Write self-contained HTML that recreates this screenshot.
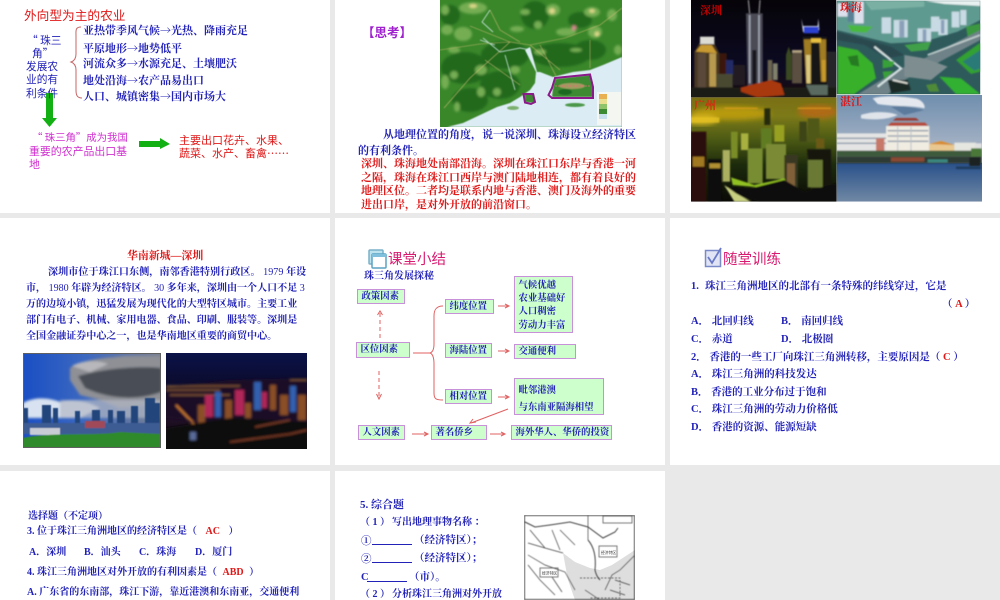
<!DOCTYPE html>
<html lang="zh"><head><meta charset="utf-8"><title>珠三角</title>
<style>
html,body{margin:0;padding:0;width:1000px;height:600px;overflow:hidden;background:#e9e9e9}
#wrap{position:relative;width:1000px;height:600px;overflow:hidden;filter:blur(.35px)}
.s{position:absolute;background:#fff}
svg{position:absolute;left:0;top:0}
.t{position:absolute;white-space:nowrap;line-height:14px;margin-top:1px;font-family:"Liberation Serif","Noto Serif CJK SC",serif;font-weight:700;font-size:10.5px;color:#2222b8}
.c{font-family:"Noto Serif CJK SC",serif}
.h{font-family:"Noto Sans CJK SC","Liberation Sans",sans-serif;font-weight:400}
.r{color:#e01818}.m{color:#d030d0}
.u{display:inline-block;border-bottom:1px solid #2222b8;height:10px;vertical-align:baseline}
.b{position:absolute;box-sizing:border-box;background:#ccffcc;border:1.5px dotted #b040c0;outline:1px solid #c890d8;outline-offset:-1px;color:#2222b8;font:700 9.4px/13px "Liberation Serif","Noto Serif CJK SC",serif;padding:.5px 0 0 3.5px;white-space:nowrap}
</style></head><body><div id="wrap">
<div class="s" style="left:0;top:0;width:330px;height:213px"></div>
<div class="s" style="left:335px;top:0;width:330px;height:213px"></div>
<div class="s" style="left:670px;top:0;width:330px;height:213px"></div>
<div class="s" style="left:0;top:218px;width:330px;height:247px"></div>
<div class="s" style="left:335px;top:218px;width:330px;height:247px"></div>
<div class="s" style="left:670px;top:218px;width:330px;height:247px"></div>
<div class="s" style="left:0;top:471px;width:330px;height:129px"></div>
<div class="s" style="left:335px;top:471px;width:330px;height:129px"></div>

<svg width="1000" height="600" viewBox="0 0 1000 600">
<defs>
<clipPath id="c1"><rect x="440" y="0" width="182" height="127"/></clipPath>
<clipPath id="a2"><rect x="0" y="0" width="436" height="292"/></clipPath>
<clipPath id="a3"><rect x="437" y="2" width="431" height="281"/></clipPath>
<clipPath id="a4"><rect x="0" y="292" width="437" height="313"/></clipPath>
<clipPath id="a5"><rect x="437" y="285" width="436" height="320"/></clipPath>
<clipPath id="c6"><rect x="23" y="353" width="138" height="95"/></clipPath>
<clipPath id="c7"><rect x="166" y="353" width="141" height="96"/></clipPath>
<clipPath id="c8"><rect x="524" y="515" width="111" height="85"/></clipPath>
<linearGradient id="g1" x1="0" y1="0" x2="0" y2="1"><stop offset="0" stop-color="#060408"/><stop offset=".7" stop-color="#0c0a22"/><stop offset="1" stop-color="#1a0c10"/></linearGradient>
<linearGradient id="g2" x1="0" y1="0" x2="0" y2="1"><stop offset="0" stop-color="#7a6e14"/><stop offset=".18" stop-color="#7c7a18"/><stop offset=".4" stop-color="#4c5a14"/><stop offset=".65" stop-color="#1c2a0c"/><stop offset="1" stop-color="#0a0a06"/></linearGradient>
<linearGradient id="g3" x1="0" y1="0" x2="0" y2="1"><stop offset="0" stop-color="#6f8eae"/><stop offset=".8" stop-color="#a8b4c6"/></linearGradient>
<linearGradient id="g4" x1="0" y1="0" x2="0" y2="1"><stop offset="0" stop-color="#28508a"/><stop offset="1" stop-color="#7088a4"/></linearGradient>
<linearGradient id="g5" x1="0" y1="0" x2="1" y2="0"><stop offset="0" stop-color="#1a4fc4"/><stop offset=".45" stop-color="#3c68c0"/><stop offset="1" stop-color="#7a8090"/></linearGradient>
<linearGradient id="g6" x1="0" y1="0" x2="0" y2="1"><stop offset="0" stop-color="#0a1248"/><stop offset=".3" stop-color="#0c0c30"/><stop offset=".7" stop-color="#201026"/><stop offset="1" stop-color="#050508"/></linearGradient>
<filter id="bl"><feGaussianBlur stdDeviation="1.3"/></filter>
<filter id="bl2"><feGaussianBlur stdDeviation=".5"/></filter>
<filter id="bl3"><feGaussianBlur stdDeviation="2"/></filter>
<filter id="bl4"><feGaussianBlur stdDeviation="8"/></filter>
</defs>

<!-- slide 1 -->
<path d="M81 27C75 27 76 31 76 36V54C76 59 74 61 71 62C74 63 76 65 76 70V90C76 95 77 98 82 98" fill="none" stroke="#c86464" stroke-width="1"/>
<path d="M46 93H53V118H57L49.500 127L42 118H46Z" fill="#12b012"/>
<path d="M139 141H160V138L170 144L160 149V147H139Z" fill="#12b012"/>

<!-- slide 2 map -->
<g clip-path="url(#c1)">
<rect x="440" y="0" width="182" height="127" fill="#3a872a"/>
<g filter="url(#bl)">
<g fill="#20691c">
<ellipse cx="465" cy="68" rx="24" ry="16"/><ellipse cx="505" cy="55" rx="24" ry="14"/><ellipse cx="500" cy="85" rx="20" ry="14"/><ellipse cx="470" cy="100" rx="18" ry="12"/><ellipse cx="560" cy="55" rx="30" ry="12"/><ellipse cx="590" cy="50" rx="16" ry="10"/><ellipse cx="535" cy="15" rx="14" ry="14"/><ellipse cx="450" cy="15" rx="10" ry="10"/><ellipse cx="580" cy="20" rx="12" ry="8"/>
</g>
<g fill="#74ad52">
<ellipse cx="473" cy="8" rx="14" ry="6"/><ellipse cx="445" cy="10" rx="4" ry="5"/><ellipse cx="447" cy="30" rx="6" ry="5"/><ellipse cx="463" cy="34" rx="9" ry="7"/><ellipse cx="454" cy="50" rx="6" ry="3"/><ellipse cx="454" cy="75" rx="4" ry="4"/>
<ellipse cx="481" cy="70" rx="6" ry="5"/><ellipse cx="445" cy="82" rx="4" ry="7"/><ellipse cx="481" cy="92" rx="4" ry="5"/><ellipse cx="497" cy="92" rx="4" ry="4"/><ellipse cx="457" cy="107" rx="3" ry="5"/>
<ellipse cx="517" cy="29" rx="7" ry="3"/><ellipse cx="538" cy="25" rx="4" ry="4"/><ellipse cx="553" cy="10" rx="7" ry="6"/><ellipse cx="566" cy="32" rx="10" ry="4"/><ellipse cx="595" cy="32" rx="7" ry="6"/><ellipse cx="612" cy="15" rx="5" ry="6"/>
<ellipse cx="592" cy="12" rx="8" ry="5"/><ellipse cx="540" cy="52" rx="6" ry="3"/><ellipse cx="576" cy="50" rx="6" ry="2"/><ellipse cx="618" cy="50" rx="4" ry="5"/><ellipse cx="515" cy="70" rx="5" ry="4"/><ellipse cx="525" cy="12" rx="5" ry="3"/>
</g>
<g fill="#dcd788"><ellipse cx="552" cy="11" rx="3" ry="3"/><ellipse cx="473" cy="6" rx="4" ry="2"/><ellipse cx="597" cy="34" rx="2.500" ry="2.500"/><ellipse cx="592" cy="11" rx="3" ry="2"/></g>
<ellipse cx="574" cy="28" rx="2.500" ry="2.500" fill="#d88890"/>
</g>
<path d="M525 50L530 47L537 72L540 72L553 77L573 72L590 70L603 65L622 57V127H447L463 123L480 115L497 107L510 103L520 97L530 90L535 83L536 72Z" fill="#dcecf4" filter="url(#bl2)"/>
<g filter="url(#bl2)">
<path d="M555 79L590 75L593 87L593 97L552 97L553 88Z" fill="#3c8a32"/>
<ellipse cx="572" cy="86" rx="13" ry="3" fill="#a09a60"/><ellipse cx="565" cy="92" rx="7" ry="3" fill="#1f6a20"/>
<path d="M524 94H534L535 103L525 102Z" fill="#3c8a32"/>
<ellipse cx="575" cy="105" rx="10" ry="2" fill="#4c9848"/><ellipse cx="513" cy="108" rx="6" ry="2" fill="#7cb070"/>
</g>
<g fill="none" stroke-width=".6" opacity=".8" filter="url(#bl2)">
<path d="M444 108L470 78L510 42L530 45L565 38L600 25L622 8M470 26L510 42L530 45M490 10L500 30L520 42M530 45L560 70M540 45L556 76M590 40L590 68M440 50L480 44L510 42M485 60L520 85" stroke="#d8c078"/>
<path d="M490 10L482 22L493 32M483 38L500 52L520 48L530 50M505 55L515 90M495 45L480 40" stroke="#d8eef0" stroke-width=".9"/>
</g>
<path d="M523.500 94H533L535 102L531 104L525 102.500Z" fill="none" stroke="#8a1a8a" stroke-width="2"/>
<path d="M555 78L590 74.500L593 87L593 98L552 98L548.500 95L552 88Z" fill="none" stroke="#8a1a8a" stroke-width="2"/>
<path d="M555 86H590" stroke="#e07070" stroke-width=".8" stroke-dasharray="2 1"/>
<rect x="597" y="92" width="24" height="33" fill="#f4f6f2"/>
<rect x="599" y="94" width="8" height="5" fill="#e8b050"/><rect x="599" y="99" width="8" height="5" fill="#e8e090"/><rect x="599" y="104" width="8" height="5" fill="#8fc46a"/><rect x="599" y="109" width="8" height="5" fill="#3c8a32"/><rect x="599" y="114" width="8" height="5" fill="#c8e0ec"/>
</g>

<!-- slide 3 photos (zoom coordinates) -->
<g transform="translate(691 0) scale(.33333)">
<g clip-path="url(#a2)">
<rect width="436" height="292" fill="url(#g1)"/>
<g filter="url(#bl3)">
<path d="M172 0L176 40M207 0L204 40" stroke="#b0b0b0" stroke-width="3"/>
<path d="M165 40H215V260H170Z" fill="#4c4c56"/><path d="M176 45V250M204 45V250" stroke="#aeb2c0" stroke-width="4"/><path d="M190 150V260" stroke="#14141c" stroke-width="12"/>
<path d="M10 155L25 130H70L85 160V290H10Z" fill="#4a3820"/><rect x="27" y="110" width="43" height="22" fill="#dcdcd4"/><path d="M14 155L30 135H62L78 160Z" fill="#c89a30"/><path d="M55 160H75V260H55Z" fill="#b89a50"/><path d="M20 160H45V290H20Z" fill="#5a4a3a"/>
<rect x="85" y="160" width="22" height="115" fill="#3a1810"/><rect x="105" y="180" width="22" height="45" fill="#202a68"/><rect x="127" y="195" width="35" height="60" fill="#201a22"/><rect x="75" y="222" width="50" height="50" fill="#4a4830"/>
<rect x="230" y="180" width="14" height="70" fill="#6a6450"/><rect x="246" y="190" width="14" height="50" fill="#80806c"/><path d="M285 165L293 140L302 165V240H285Z" fill="#3a4a20"/><rect x="303" y="150" width="30" height="100" fill="#5a5040"/><rect x="303" y="150" width="30" height="8" fill="#b0a080"/>
<rect x="408" y="155" width="28" height="120" fill="#26262c"/>
<path d="M335 110H408L408 270H345Z" fill="#141418"/><path d="M338 118H360V250H345ZM385 118H405V245H390Z" fill="#a07c22"/><path d="M345 165H358V250H347Z" fill="#d8c880"/><path d="M392 180H404V245H394Z" fill="#c89a2c"/><path d="M360 115H390V128H360Z" fill="#e8c040"/>
<path d="M331 55L336 96L385 90L382 55L380 78L336 78Z" fill="#e0e8ff"/><rect x="338" y="80" width="45" height="20" fill="#2a40d0"/>
<path d="M0 262H436V292H0Z" fill="#1c1a14"/><path d="M150 262L240 240L270 250L280 285L200 292L150 275Z" fill="#a83810"/><path d="M345 255H410V285H360Z" fill="#5a6a60"/>
</g>
</g>
<g clip-path="url(#a3)">
<rect x="437" y="2" width="431" height="281" fill="#2e5a5c"/>
<g filter="url(#bl3)">
<path d="M437 2H868V60L800 95L700 125L600 130L437 90Z" fill="#5f9a90"/><path d="M700 2H868V18L760 12Z" fill="#e8f0f0"/>
<path d="M520 2H700V20L540 30Z" fill="#7ab0a4"/>
<path d="M440 10H470V50H440ZM490 5H518V70H490Z" fill="#dce0ec"/><path d="M470 12H488V65H470Z" fill="#5a8098"/>
<path d="M572 52H600V100H572ZM608 60H650V112H608ZM680 85H720V125H680ZM720 50H745V95H720ZM742 58H770V105H742ZM782 35H805V82H782ZM808 30H826V75H808Z" fill="#c8dae4"/><path d="M625 62H640V112H625ZM695 88H706V125H695ZM750 60H760V100H750Z" fill="#8aa0b8"/>
<path d="M470 75L545 80L525 98L480 95Z" fill="#48b840"/><path d="M640 135L720 125L710 150L660 155Z" fill="#40a048"/><path d="M825 80L868 70V95L830 110Z" fill="#3a9840"/>
<path d="M437 95L600 140L640 165L590 175L520 135L437 120Z" fill="#2a4850"/>
<path d="M440 138L500 150L545 190L555 235L490 282H440Z" fill="#38b02c"/><path d="M470 170L500 165L505 200L480 195Z" fill="#287a20"/>
<path d="M868 90L700 175L620 210L500 283H590L640 240L700 210L868 120Z" fill="#6e8288"/><path d="M550 140L630 205L560 260" stroke="#d8e4e4" stroke-width="6" fill="none"/><path d="M868 105L710 165" stroke="#c4d0d0" stroke-width="5"/>
<path d="M575 178L610 185L605 200L575 205ZM575 215L608 213L580 238Z" fill="#38a038"/>
<path d="M868 128L795 180L840 222L868 215Z" fill="#30a030"/><path d="M868 150L815 185L850 212L868 205Z" fill="#2a7a78"/>
<path d="M745 230L810 235L868 282H795Z" fill="#30b030"/><path d="M705 255L735 250L745 275H715Z" fill="#508a38"/>
<path d="M590 240H650L660 270L600 280Z" fill="#1c2a28"/><path d="M605 240L650 250" stroke="#e0e0d8" stroke-width="5"/><path d="M640 165L700 175L770 200L720 240L640 230Z" fill="#7e8e90"/>
</g>
</g>
<g clip-path="url(#a4)">
<rect y="292" width="437" height="313" fill="url(#g2)"/>
<g filter="url(#bl4)"><ellipse cx="120" cy="340" rx="120" ry="20" fill="#b89a10"/><ellipse cx="380" cy="335" rx="60" ry="20" fill="#b06a14"/><ellipse cx="30" cy="360" rx="50" ry="14" fill="#d8b820"/></g>
<g filter="url(#bl3)">
<path d="M0 352H85V368H0Z" fill="#e4c020" opacity=".8"/><path d="M320 325H420M100 325H200" stroke="#e8a020" stroke-width="4" opacity=".7"/>
<rect x="220" y="325" width="18" height="50" fill="#262c10"/>
<rect x="325" y="365" width="22" height="60" fill="#3c4414"/><rect x="350" y="355" width="35" height="70" fill="#505818"/>
<rect x="150" y="400" width="22" height="50" fill="#a8b040"/><rect x="120" y="395" width="20" height="80" fill="#7a8c28"/><rect x="210" y="385" width="32" height="60" fill="#607c20"/><rect x="250" y="375" width="30" height="50" fill="#98a020"/>
<rect x="170" y="445" width="45" height="105" fill="#788c30"/><rect x="225" y="432" width="60" height="105" fill="#7a8a34"/><rect x="95" y="450" width="22" height="95" fill="#aab060"/><rect x="280" y="465" width="40" height="105" fill="#383820"/><path d="M288 490H312V560H288Z" fill="#806038"/>
<path d="M120 532L190 555L280 535L300 570L180 560L125 555Z" fill="#90c020"/>
<path d="M0 395H46V605H0Z" fill="#2c1008"/><path d="M5 470H40V500H5Z" fill="#a07820"/>
<path d="M50 478H92V605H50Z" fill="#0e0e08"/><path d="M55 490H88V505H55Z" fill="#b09030"/>
<path d="M348 448H420V570L360 575Z" fill="#141408"/><path d="M375 415H400V445H375Z" fill="#6a5a18"/><path d="M350 480H395V562H350Z" fill="#6a7a34"/>
<path d="M100 560L180 565L280 540L340 575L437 550V605H210L120 585Z" fill="#0a0e08"/><path d="M100 555L135 580L180 605H130Z" fill="#c8d080"/>
</g>
</g>
<g clip-path="url(#a5)">
<rect x="437" y="285" width="436" height="205" fill="url(#g3)"/>
<rect x="437" y="488" width="436" height="117" fill="url(#g4)"/>
<g filter="url(#bl3)">
<path d="M545 295C580 285 640 290 670 295C690 296 705 315 700 325C660 315 600 320 560 312Z" fill="#e4e8ee"/><path d="M510 345C545 332 600 335 620 345C590 360 540 360 510 355Z" fill="#dfe4ea"/><path d="M600 320C640 315 680 325 700 330L640 345Z" fill="#5c7a9c"/>
<path d="M437 400H585V460H437Z" fill="#e4e4e4"/><path d="M437 415H585M437 430H585" stroke="#8a98a8" stroke-width="4"/><rect x="555" y="415" width="25" height="45" fill="#c87868"/>
<path d="M585 378H715V460H585Z" fill="#f0ece2"/><path d="M590 378H712L702 368H600Z" fill="#b84a3a"/><path d="M605 362H685L675 354H615Z" fill="#9a3a30"/>
<path d="M590 392H712M590 408H712M590 424H712" stroke="#8a98a8" stroke-width="4"/><path d="M620 380V458M660 380V458" stroke="#b8c0c8" stroke-width="3"/>
<path d="M715 432L750 423L790 435V460H715Z" fill="#e8c890"/><path d="M715 432L750 423L790 435Z" fill="#d88a30"/>
<path d="M790 428H855V458H790Z" fill="#e6e6e0"/><rect x="852" y="430" width="20" height="18" fill="#e0e0e0"/>
<path d="M437 452H872V470H437Z" fill="#3e5a3c"/><path d="M840 445H872V470H840Z" fill="#4a7838"/>
<path d="M437 470H872V490H437Z" fill="#2e3a34"/><path d="M600 472H700V485H600Z" fill="#8a4a30"/><path d="M710 478H770V487H710Z" fill="#3a8a80"/><path d="M795 500H870V507H795Z" fill="#1e3a5c"/><path d="M835 472H868V498H835Z" fill="#1e2420"/>
</g>
</g>
</g>

<!-- slide 4 photos -->
<g clip-path="url(#c6)">
<rect x="23" y="353" width="138" height="95" fill="url(#g5)"/>
<g filter="url(#bl)">
<path d="M70 368C85 358 110 358 125 356L161 356V405L120 408L100 400L80 395L70 380Z" fill="#8e9096"/>
<path d="M78 376C105 368 140 366 161 368V392C140 400 110 400 85 388Z" fill="#4a4d54"/>
<path d="M72 366C82 360 98 360 108 364L90 372Z" fill="#b8b8bc"/>
<path d="M23 403C35 396 50 398 60 402C72 398 90 402 100 408L80 418H23Z" fill="#d8e2f0"/>
<rect x="60" y="400" width="101" height="18" fill="#b4b8c4" opacity=".7"/>
</g>
<g filter="url(#bl2)">
<path d="M23 408L28 408V430H23ZM42 405H51V430H42ZM53 408H58V430H53ZM75 411H80V428H75ZM92 410H100V428H92ZM108 410H113V428H108ZM117 411H125V428H117ZM131 406H138V428H131ZM145 398H155V432H145ZM155 403H160V432H155Z" fill="#24447c"/>
<rect x="23" y="423" width="138" height="11" fill="#3e5c94"/>
<path d="M30 428H60V435H30Z" fill="#c8ccd4"/><path d="M85 421H105V428H85Z" fill="#a04a58"/>
<path d="M23 438C50 432 100 436 120 432L161 434V448H23Z" fill="#2e8a2a"/>
</g>
<rect x="23.500" y="353.500" width="137" height="94" fill="none" stroke="#606060"/>
</g>
<g clip-path="url(#c7)">
<rect x="166" y="353" width="141" height="96" fill="url(#g6)"/>
<g filter="url(#bl)">
<path d="M166 387L230 380L307 378V430L166 418Z" fill="#1a0c28"/>
<path d="M166 386H240M166 390H220M170 395H230M290 380H307" stroke="#e8a040" stroke-width="1" opacity=".6"/>
<path d="M176 405L195 425" stroke="#f09030" stroke-width="1.500"/>
<g fill="#b02858"><rect x="205" y="395" width="8" height="22"/><rect x="235" y="390" width="9" height="25"/><rect x="262" y="392" width="5" height="16"/></g>
<g fill="#3060b0"><rect x="215" y="392" width="6" height="25"/><rect x="254" y="382" width="7" height="28"/><rect x="290" y="386" width="6" height="26"/></g>
<g fill="#8a5028"><rect x="198" y="405" width="7" height="18"/><rect x="225" y="400" width="7" height="22"/><rect x="245" y="403" width="6" height="15"/><rect x="270" y="385" width="6" height="25"/><rect x="280" y="395" width="8" height="20"/><rect x="298" y="395" width="8" height="25"/></g>
<path d="M166 428L230 418L307 422V449H166Z" fill="#08080c"/>
<path d="M230 442L290 434L307 430M255 427L290 420" stroke="#a05030" stroke-width="1"/>
<rect x="190" y="432" width="6" height="8" fill="#5a6a9a"/>
</g>
</g>

<!-- slide 5 icon + arrows -->
<g fill="none">
<rect x="369" y="250" width="14" height="14" rx="1" fill="#bde3ef" stroke="#7ab0c8" stroke-width="1.500"/>
<rect x="372" y="254" width="14" height="14" rx="1" fill="#fff" stroke="#5aa4c4" stroke-width="1.500"/>
<rect x="372" y="254" width="14" height="3" fill="#80c0dc"/>
</g>
<g stroke="#e06060" stroke-width="1" fill="none">
<path d="M380 338V311" stroke-dasharray="4 3"/><path d="M377.500 315L380 311L382.500 315"/>
<path d="M379 371V398" stroke-dasharray="4 3"/><path d="M376.500 394L379 399L381.500 394"/>
<path d="M413 353H430"/>
<path d="M443 306C436 306 434 310 434 316V344C434 349 433 352 430 353C433 354 434 358 434 364V393C434 399 436 400 443 400"/>
<path d="M498 306H509M505 304L509 306L505 308M498 351H509M505 349L509 351L505 353M498 397H509M505 395L509 397L505 399"/>
<path d="M508 409L471 423M476 422L470 423L473 419"/>
<path d="M412 434H428M424 432L428 434L424 436M490 434H505M501 432L505 434L501 436"/>
</g>

<!-- slide 6 icon -->
<rect x="705.500" y="250.500" width="15" height="16" fill="#e0e4f4" stroke="#7a8ac8" stroke-width="1.500"/>
<path d="M708 257L712 263L721 248" fill="none" stroke="#6a7ac8" stroke-width="1.800"/>

<!-- slide 8 map -->
<g clip-path="url(#c8)">
<rect x="524" y="515" width="111" height="85" fill="#fff"/>
<path d="M563 553L575 562L590 568L600 570L612 565L635 550V600H575L568 580Z" fill="#dedede"/>
<g fill="none" stroke="#444" stroke-width=".7" filter="url(#bl2)">
<rect x="524.500" y="515.500" width="110" height="84" stroke-width="1"/>
<path d="M525 522L535 527L550 525L570 522L588 527L603 538L615 532L618 528" stroke-width="1"/>
<path d="M588 540C595 548 596 560 595 570C596 575 598 578 600 580" stroke-width="1"/>
<path d="M528 543L545 548L563 553M528 555L545 565L565 572L575 590M528 565L540 580L555 595M530 530L545 548M552 530L560 550M560 530L575 545"/>
<path d="M605 590L612 575L620 570L635 555M585 590L600 600M610 590L625 595M615 580L630 585"/>
<rect x="599" y="546" width="18" height="11"/><rect x="540" y="568" width="18" height="9"/><rect x="603" y="516" width="29" height="7"/>
<path d="M580 578H620V598H590" stroke-dasharray="2 1.500"/><path d="M588 515V540"/>
<path d="M552 577L562 592"/>
</g>
<g font-family="Liberation Sans,Noto Sans CJK SC,sans-serif" font-size="3.800" fill="#333"><text x="601" y="554">经济特区</text><text x="542" y="574.500">经济特区</text></g>
</g>
</svg>

<!-- slide 1 text -->
<div class="t h r" style="left:24px;top:7px;font-size:12.7px">外向型为主的农业</div>
<div class="t h" style="left:27px;top:33px;font-size:10.700px">“ 珠三</div>
<div class="t h" style="left:32px;top:46px;font-size:10.700px">角”</div>
<div class="t h" style="left:26px;top:59px;font-size:10.700px">发展农</div>
<div class="t h" style="left:26px;top:72px;font-size:10.700px">业的有</div>
<div class="t h" style="left:26px;top:86px;font-size:10.700px">利条件</div>
<div class="t c" style="left:83px;top:22px;font-size:11px">亚热带季风气候→光热、降雨充足</div>
<div class="t c" style="left:83px;top:40px;font-size:11px">平原地形→地势低平</div>
<div class="t c" style="left:83px;top:55px;font-size:11px">河流众多→水源充足、土壤肥沃</div>
<div class="t c" style="left:83px;top:72px;font-size:11px">地处沿海→农产品易出口</div>
<div class="t c" style="left:83px;top:88px;font-size:11px">人口、城镇密集→国内市场大</div>
<div class="t h m" style="left:32px;top:129px;font-size:10.400px">“ 珠三角”成为我国</div>
<div class="t h m" style="left:29px;top:143px;font-size:10.900px">重要的农产品出口基</div>
<div class="t h m" style="left:29px;top:156px;font-size:10.900px">地</div>
<div class="t h r" style="left:179px;top:132px;font-size:11px">主要出口花卉、水果、</div>
<div class="t h r" style="left:179px;top:145px;font-size:11px">蔬菜、水产、畜禽……</div>

<!-- slide 2 text -->
<div class="t h" style="left:362px;top:24px;font-size:12.500px;font-weight:700;color:#a020d0">【思考】</div>
<div class="t" style="left:383px;top:127px;font-size:11px">从地理位置的角度，说一说深圳、珠海设立经济特区</div>
<div class="t" style="left:358px;top:143px;font-size:11px">的有利条件。</div>
<div class="t r" style="left:361px;top:156px;font-size:11px">深圳、珠海地处南部沿海。深圳在珠江口东岸与香港一河</div>
<div class="t r" style="left:361px;top:170px;font-size:11px">之隔，珠海在珠江口西岸与澳门陆地相连，都有着良好的</div>
<div class="t r" style="left:361px;top:183px;font-size:11px">地理区位。二者均是联系内地与香港、澳门及海外的重要</div>
<div class="t r" style="left:361px;top:197px;font-size:11px">进出口岸，是对外开放的前沿窗口。</div>

<!-- slide 3 labels -->
<div class="t" style="left:700px;top:3px;font-size:11px;color:#c00000">深圳</div>
<div class="t" style="left:840px;top:0;font-size:11px;color:#d81010">珠海</div>
<div class="t" style="left:694px;top:98px;font-size:11px;color:#d03010">广州</div>
<div class="t" style="left:840px;top:94px;font-size:11px;color:#e01010">湛江</div>

<!-- slide 4 text -->
<div class="t r" style="left:127px;top:248px;font-size:10.900px">华南新城—深圳</div>
<div class="t" style="left:48px;top:265px;font-size:10.150px">深圳市位于珠江口东侧，南邻香港特别行政区。 <span style="font-weight:400">1979</span> 年设</div>
<div class="t" style="left:26px;top:281px;font-size:10.050px">市， <span style="font-weight:400">1980</span> 年辟为经济特区。 <span style="font-weight:400">30</span> 多年来，深圳由一个人口不足 <span style="font-weight:400">3</span></div>
<div class="t" style="left:26px;top:297px;font-size:10.050px">万的边境小镇，迅猛发展为现代化的大型特区城市。主要工业</div>
<div class="t" style="left:26px;top:313px;font-size:10.050px">部门有电子、机械、家用电器、食品、印刷、服装等。深圳是</div>
<div class="t" style="left:26px;top:329px;font-size:10.050px">全国金融证券中心之一，也是华南地区重要的商贸中心。</div>

<!-- slide 5 -->
<div class="t h" style="left:388px;top:251px;font-size:14.500px;color:#d81b70">课堂小结</div>
<div class="t" style="left:364px;top:269px;font-size:10px">珠三角发展探秘</div>
<div class="b" style="left:357px;top:289px;width:48px;height:15px">政策因素</div>
<div class="b" style="left:356px;top:342px;width:54px;height:16px">区位因素</div>
<div class="b" style="left:445px;top:299px;width:49px;height:15px">纬度位置</div>
<div class="b" style="left:445px;top:343px;width:47px;height:15px">海陆位置</div>
<div class="b" style="left:445px;top:389px;width:47px;height:15px">相对位置</div>
<div class="b" style="left:514px;top:276px;width:59px;height:57px;line-height:13.200px;padding-top:3px">气候优越<br>农业基础好<br>人口稠密<br>劳动力丰富</div>
<div class="b" style="left:514px;top:344px;width:62px;height:15px">交通便利</div>
<div class="b" style="left:514px;top:378px;width:90px;height:37px;line-height:17px;padding-top:4px">毗邻港澳<br>与东南亚隔海相望</div>
<div class="b" style="left:358px;top:425px;width:47px;height:15px">人文因素</div>
<div class="b" style="left:431px;top:425px;width:56px;height:15px">著名侨乡</div>
<div class="b" style="left:511px;top:425px;width:101px;height:15px">海外华人、华侨的投资</div>

<!-- slide 6 -->
<div class="t h" style="left:723px;top:251px;font-size:14.500px;color:#d81b70">随堂训练</div>
<div class="t" style="left:691px;top:279px">1.</div><div class="t" style="left:705px;top:279px">珠江三角洲地区的北部有一条特殊的纬线穿过，它是</div>
<div class="t" style="left:942px;top:297px">（ <span class="r">A</span> ）</div>
<div class="t" style="left:691px;top:314px">A． 北回归线</div><div class="t" style="left:781px;top:314px">B． 南回归线</div>
<div class="t" style="left:691px;top:332px">C． 赤道</div><div class="t" style="left:781px;top:332px">D． 北极圈</div>
<div class="t" style="left:691px;top:350px">2． 香港的一些工厂向珠江三角洲转移，主要原因是（ <span class="r">C</span> ）</div>
<div class="t" style="left:691px;top:367px">A． 珠江三角洲的科技发达</div>
<div class="t" style="left:691px;top:385px">B． 香港的工业分布过于饱和</div>
<div class="t" style="left:691px;top:402px">C． 珠江三角洲的劳动力价格低</div>
<div class="t" style="left:691px;top:420px">D． 香港的资源、能源短缺</div>

<!-- slide 7 -->
<div class="t" style="left:28px;top:509px;font-size:10px">选择题（不定项）</div>
<div class="t" style="left:27px;top:524px;font-size:10px">3. 位于珠江三角洲地区的经济特区是（ <span class="r" style="margin:0 6px">AC</span> ）</div>
<div class="t" style="left:29px;top:545px;font-size:10px">A．深圳</div><div class="t" style="left:84px;top:545px;font-size:10px">B．汕头</div><div class="t" style="left:139px;top:545px;font-size:10px">C．珠海</div><div class="t" style="left:195px;top:545px;font-size:10px">D．厦门</div>
<div class="t" style="left:27px;top:565px;font-size:10px">4. 珠江三角洲地区对外开放的有利因素是（ <span class="r" style="margin:0 3px">ABD</span> ）</div>
<div class="t" style="left:27px;top:585px;font-size:10px">A. 广东省的东南部，珠江下游，靠近港澳和东南亚，交通便利</div>

<!-- slide 8 -->
<div class="t" style="left:360px;top:497px;font-size:11px">5. 综合题</div>
<div class="t" style="left:360px;top:515px;font-size:10px">（ 1 ）</div><div class="t" style="left:392px;top:515px;font-size:10px">写出地理事物名称 ：</div>
<div class="t c" style="left:361px;top:533px;font-size:10.500px">①</div><div class="t" style="left:372px;top:533px"><span class="u" style="width:40px"></span></div><div class="t" style="left:414px;top:533px;font-size:10.500px">（经济特区）；</div>
<div class="t c" style="left:361px;top:551px;font-size:10.500px">②</div><div class="t" style="left:372px;top:551px"><span class="u" style="width:40px"></span></div><div class="t" style="left:414px;top:551px;font-size:10.500px">（经济特区）；</div>
<div class="t" style="left:361px;top:570px;font-size:10.500px">C</div><div class="t" style="left:367px;top:570px"><span class="u" style="width:40px"></span></div><div class="t" style="left:409px;top:570px;font-size:10.500px">（市）。</div>
<div class="t" style="left:360px;top:587px;font-size:10px">（ 2 ）</div><div class="t" style="left:392px;top:587px;font-size:10px">分析珠江三角洲对外开放</div>
</div></body></html>
